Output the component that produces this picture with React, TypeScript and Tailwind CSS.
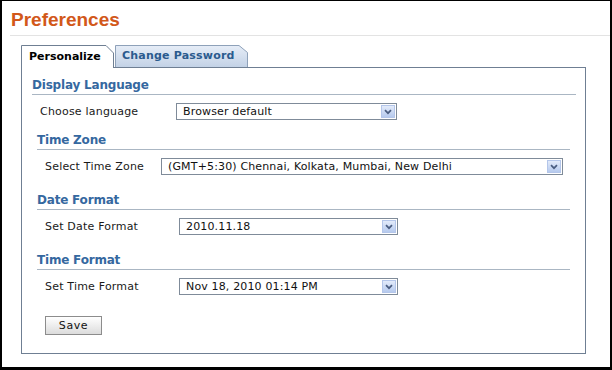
import React from "react";

function Chevron() {
  return (
    <svg width="8" height="6" viewBox="0 0 8 6" className="block">
      <path d="M1 1.2 L4 4.2 L7 1.2" fill="none" stroke="#4a5d80" strokeWidth="1.7" />
    </svg>
  );
}

function Select({ value, className }: { value: string; className: string }) {
  return (
    <div className={`flex h-[17px] items-center border border-[#7f8b99] bg-white ${className}`}>
      <span className="flex-1 truncate pl-[6px] text-[11px] leading-[15px] tracking-[0.15px] text-[#111]">{value}</span>
      <div className="mr-[1px] flex h-[13px] w-[14px] items-center justify-center border border-[#b4c6ea] bg-gradient-to-b from-[#e3ebfa] to-[#b6caee]">
        <Chevron />
      </div>
    </div>
  );
}

function Heading({ children, className }: { children: React.ReactNode; className: string }) {
  return (
    <div className={`border-b border-[#aab6c3] pb-[2px] ${className}`}>
      <div className="h-[14px] text-[12px] font-bold leading-[14px] tracking-[-0.2px] text-[#3568a0]">{children}</div>
    </div>
  );
}

export default function App() {
  return (
    <div className="box-border h-[370px] w-[612px] overflow-hidden border-b-[3px] border-l-2 border-r-2 border-t border-black bg-white font-['DejaVu_Sans',sans-serif]">
      {/* Title */}
      <div className="ml-[8px] mt-[8px] border-b border-[#e3e3e3] pb-[4px]">
        <h1 className="h-[22px] pl-[1px] font-['Liberation_Sans',Arial,sans-serif] text-[19px] font-bold leading-[22px] text-[#d2581a]">
          Preferences
        </h1>
      </div>

      {/* Tabs */}
      <div className="ml-[19px] mt-[9px] flex h-[22px] items-start">
        <div className="relative z-10 flex h-[23px] w-[93px] items-center pl-[8px]">
          <svg className="absolute inset-0" width="93" height="23" viewBox="0 0 93 23">
            <path d="M0.5 23 V0.5 H85 L92.5 8 V23" fill="#ffffff" stroke="#6f7f93" strokeWidth="1" />
          </svg>
          <span className="relative text-[11px] font-bold leading-[14px] text-black">Personalize</span>
        </div>
        <div className="relative ml-[1px] flex h-[22px] w-[133px] items-center pl-[7px]">
          <svg className="absolute inset-0" width="133" height="22" viewBox="0 0 133 22">
            <defs>
              <linearGradient id="tabg" x1="0" y1="0" x2="0" y2="1">
                <stop offset="0" stopColor="#e6edf7" />
                <stop offset="1" stopColor="#c3d2e6" />
              </linearGradient>
            </defs>
            <path d="M0.5 22 V0.5 H124 L132.5 7.5 V22" fill="url(#tabg)" stroke="#8ea1b9" strokeWidth="1" />
          </svg>
          <span className="relative text-[11px] font-bold leading-[14px] tracking-[0.2px] text-[#2b5b8e]">Change Password</span>
        </div>
      </div>

      {/* Panel */}
      <div className="ml-[19px] w-[565px] border border-[#6f7f93] pb-[18px] pt-[10px]">
        {/* Display Language */}
        <div className="ml-[10px] mr-[9px]">
          <Heading className="">Display Language</Heading>
          <div className="mt-[8px] flex items-center pl-[8px]">
            <span className="w-[136px] text-[11px] leading-[15px] tracking-[0.2px] text-[#1a1a1a]">Choose language</span>
            <Select value="Browser default" className="w-[221px]" />
          </div>
        </div>

        {/* Time Zone */}
        <div className="ml-[15px] mr-[15px] mt-[13px]">
          <Heading className="">Time Zone</Heading>
          <div className="mt-[8px] flex items-center pl-[8px]">
            <span className="w-[116px] text-[11px] leading-[15px] tracking-[0.2px] text-[#1a1a1a]">Select Time Zone</span>
            <Select value="(GMT+5:30) Chennai, Kolkata, Mumbai, New Delhi" className="w-[402px]" />
          </div>
        </div>

        {/* Date Format */}
        <div className="ml-[15px] mr-[15px] mt-[18px]">
          <Heading className="">Date Format</Heading>
          <div className="mt-[8px] flex items-center pl-[8px]">
            <span className="w-[134px] text-[11px] leading-[15px] tracking-[0.2px] text-[#1a1a1a]">Set Date Format</span>
            <Select value="2010.11.18" className="w-[219px]" />
          </div>
        </div>

        {/* Time Format */}
        <div className="ml-[15px] mr-[15px] mt-[18px]">
          <Heading className="">Time Format</Heading>
          <div className="mt-[8px] flex items-center pl-[8px]">
            <span className="w-[134px] text-[11px] leading-[15px] tracking-[0.2px] text-[#1a1a1a]">Set Time Format</span>
            <Select value="Nov 18, 2010 01:14 PM" className="w-[219px]" />
          </div>
        </div>

        <button className="ml-[23px] mt-[21px] flex h-[19px] w-[57px] items-center justify-center border border-[#8c8c8c] bg-gradient-to-b from-white to-[#dcdcdc] text-[11px] leading-[15px] tracking-[0.6px] text-[#111]">
          Save
        </button>
      </div>
    </div>
  );
}
